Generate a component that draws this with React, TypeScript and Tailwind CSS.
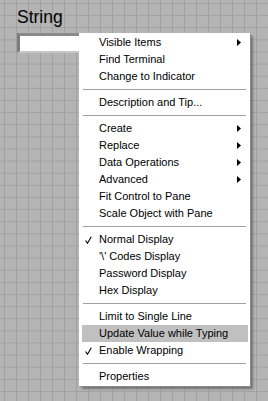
import React from "react";

type Item =
  | { kind: "sep" }
  | { kind: "item"; label: string; arrow?: boolean; check?: boolean; hl?: boolean };

const items: Item[] = [
  { kind: "item", label: "Visible Items", arrow: true },
  { kind: "item", label: "Find Terminal" },
  { kind: "item", label: "Change to Indicator" },
  { kind: "sep" },
  { kind: "item", label: "Description and Tip..." },
  { kind: "sep" },
  { kind: "item", label: "Create", arrow: true },
  { kind: "item", label: "Replace", arrow: true },
  { kind: "item", label: "Data Operations", arrow: true },
  { kind: "item", label: "Advanced", arrow: true },
  { kind: "item", label: "Fit Control to Pane" },
  { kind: "item", label: "Scale Object with Pane" },
  { kind: "sep" },
  { kind: "item", label: "Normal Display", check: true },
  { kind: "item", label: "'\\' Codes Display" },
  { kind: "item", label: "Password Display" },
  { kind: "item", label: "Hex Display" },
  { kind: "sep" },
  { kind: "item", label: "Limit to Single Line" },
  { kind: "item", label: "Update Value while Typing", hl: true },
  { kind: "item", label: "Enable Wrapping", check: true },
  { kind: "sep" },
  { kind: "item", label: "Properties" },
];

function Check() {
  return (
    <svg className="absolute left-[3px] top-[5px]" width="7" height="8" viewBox="0 0 7 8">
      <path d="M0.5 4.5 L2.5 7.2 L6.3 0.8" fill="none" stroke="#000" strokeWidth="1.1" />
    </svg>
  );
}

function Arrow() {
  return (
    <svg className="absolute right-[7px] top-[5px]" width="4" height="7" viewBox="0 0 4 7">
      <path d="M0 0 L4 3.5 L0 7 Z" fill="#000" />
    </svg>
  );
}

export default function App() {
  return (
    <div
      className="relative w-[268px] h-[401px] overflow-hidden bg-[#b4b4b4] bg-[linear-gradient(to_right,#a1a1a1_1px,transparent_1px),linear-gradient(to_bottom,#a1a1a1_1px,transparent_1px)] bg-[size:12px_12.125px] bg-[position:4px_3px] pl-[17px] pt-[7px]"
      style={{ fontFamily: '"Liberation Sans", Arial, sans-serif' }}
    >
      <div className="text-[17.5px] leading-[20px] text-black">String</div>
      <div className="mt-[6px] w-[70px] h-[20px] border-l-[3px] border-t-[3px] border-b-[2px] border-l-[#7c7c7c] border-t-[#8a8a8a] border-b-[#c6c6c6] bg-white" />

      <div className="absolute left-[79px] top-[33px] w-[171px] bg-white py-[1px] shadow-[1px_1px_0_#8a8a8a,3px_3px_2px_rgba(0,0,0,0.35)]">
        {items.map((it, i) =>
          it.kind === "sep" ? (
            <div key={i} className="h-[9px] flex items-center mx-[4px]">
              <div className="w-full h-[1px] bg-[#a0a0a0]" />
            </div>
          ) : (
            <div
              key={i}
              className={
                "relative h-[17px] ml-[3px] mr-[2px] pl-[17px] flex items-center text-[11px] text-black whitespace-nowrap " +
                (it.hl ? "bg-[#c0c0c0]" : "")
              }
            >
              {it.check && <Check />}
              <span>{it.label}</span>
              {it.arrow && <Arrow />}
            </div>
          )
        )}
      </div>
    </div>
  );
}
